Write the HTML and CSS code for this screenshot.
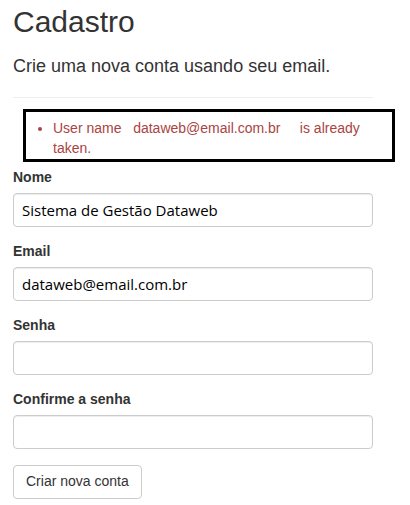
FILE: index.html
```html
<!DOCTYPE html>
<html lang="pt-BR">
<head>
<meta charset="utf-8">
<title>Cadastro</title>
<link rel="stylesheet" href="styles.css">
</head>
<body>
<div class="container">
  <h2 class="title">Cadastro</h2>
  <h4 class="subtitle">Crie uma nova conta usando seu email.</h4>
  <hr class="divider">
  <div class="errors">
    <ul class="error-list">
      <li>User name&nbsp;&nbsp; dataweb@email.com.br&nbsp;&nbsp;&nbsp;&nbsp; is already taken.</li>
    </ul>
  </div>
  <form class="form">
    <div class="form-group">
      <label class="label">Nome</label>
      <input class="control" type="text" value="Sistema de Gestão Dataweb">
    </div>
    <div class="form-group">
      <label class="label">Email</label>
      <input class="control" type="text" value="dataweb@email.com.br">
    </div>
    <div class="form-group">
      <label class="label">Senha</label>
      <input class="control" type="password">
    </div>
    <div class="form-group">
      <label class="label">Confirme a senha</label>
      <input class="control" type="password">
    </div>
    <button class="btn" type="button">Criar nova conta</button>
  </form>
</div>
</body>
</html>
```
FILE: styles.css
```css
html, body {
  margin: 0;
  padding: 0;
  background: #fff;
}
body {
  font-family: "Liberation Sans", Arial, sans-serif;
  font-size: 14px;
  line-height: 1.42857;
  color: #333;
}
.container {
  width: 360px;
  margin-left: 13px;
}
.title {
  font-size: 30px;
  font-weight: 400;
  line-height: 1.1;
  margin: 5px 0 0;
}
.subtitle {
  font-size: 18px;
  font-weight: 400;
  line-height: 1.1;
  margin: 19px 0 0;
}
.divider {
  border: 0;
  border-top: 1px solid #eee;
  margin: 20px 0 0;
  height: 0;
}
.errors {
  margin: 11px 0 0 10px;
  width: 366px;
  border: 3px solid #000;
  padding: 7px 0 0;
  color: #a94442;
}
.error-list {
  margin: 0;
  padding-left: 27px;
}
.form {
  margin-top: 6px;
}
.form-group {
  display: flex;
  flex-direction: column;
  margin-bottom: 15px;
}
.label {
  font-weight: 700;
  margin-bottom: 5px;
}
.control {
  box-sizing: border-box;
  height: 34px;
  width: 360px;
  padding: 4px 8px;
  border: 1px solid #ccc;
  border-radius: 4px;
  font-family: "Open Sans", "Noto Sans", sans-serif;
  font-size: 15px;
  color: #000;
  background: #fff;
  box-shadow: inset 0 1px 1px rgba(0,0,0,.075);
}
.btn {
  box-sizing: border-box;
  height: 34px;
  margin-top: 1px;
  padding: 6px 12px;
  font-family: "Liberation Sans", Arial, sans-serif;
  font-size: 14px;
  line-height: 1.42857;
  color: #333;
  background: #fff;
  border: 1px solid #ccc;
  border-radius: 4px;
}
```
